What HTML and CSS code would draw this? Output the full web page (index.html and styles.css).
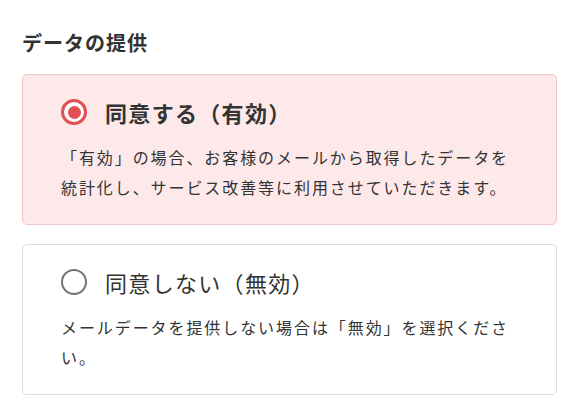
FILE: index.html
```html
<!DOCTYPE html>
<html lang="ja">
<head>
<meta charset="utf-8">
<title>データの提供</title>
<link rel="stylesheet" href="styles.css">
</head>
<body>
<div class="page">
  <h2 class="title">データの提供</h2>
  <div class="options">
    <label class="option option--selected">
      <span class="option__head">
        <span class="radio radio--on"><span class="radio__dot"></span></span>
        <span class="option__label option__label--bold">同意する（有効）</span>
      </span>
      <p class="option__desc">「有効」の場合、お客様のメールから取得したデータを統計化し、サービス改善等に利用させていただきます。</p>
    </label>
    <label class="option">
      <span class="option__head">
        <span class="radio"></span>
        <span class="option__label">同意しない（無効）</span>
      </span>
      <p class="option__desc">メールデータを提供しない場合は「無効」を選択ください。</p>
    </label>
  </div>
</div>
</body>
</html>
```
FILE: styles.css
```css
html, body {
  margin: 0;
  padding: 0;
  background: #ffffff;
}
body {
  font-family: "Noto Sans CJK JP", "Noto Sans", sans-serif;
  color: #333333;
}
.page {
  padding: 28px 18px 0 22px;
}
.title {
  margin: 0 0 16px;
  font-size: 20px;
  line-height: 30px;
  font-weight: 700;
  letter-spacing: 0.05em;
  color: #333333;
}
.options {
  display: flex;
  flex-direction: column;
  gap: 19px;
}
.option {
  display: block;
  border: 1px solid #dddddd;
  border-radius: 5px;
  background: #ffffff;
  padding: 20px 38px 22px 38px;
}
.option--selected {
  background: #fde9ea;
  border-color: #f4c5c7;
}
.option__head {
  display: flex;
  align-items: center;
  gap: 18px;
  height: 34px;
}
.radio {
  flex: none;
  box-sizing: border-box;
  width: 26px;
  height: 26px;
  border-radius: 50%;
  border: 2.5px solid #737373;
  background: #ffffff;
  display: flex;
  align-items: center;
  justify-content: center;
}
.radio--on {
  border: 3px solid #e24f55;
}
.radio__dot {
  width: 13px;
  height: 13px;
  border-radius: 50%;
  background: #e24f55;
}
.option__label {
  font-size: 22px;
  line-height: 34px;
  letter-spacing: 0.06em;
  color: #333333;
  font-weight: 400;
}
.option__label--bold {
  font-weight: 700;
}
.option__desc {
  margin: 13px 0 0;
  font-size: 16px;
  line-height: 30px;
  letter-spacing: 0.12em;
  color: #333333;
}
```
